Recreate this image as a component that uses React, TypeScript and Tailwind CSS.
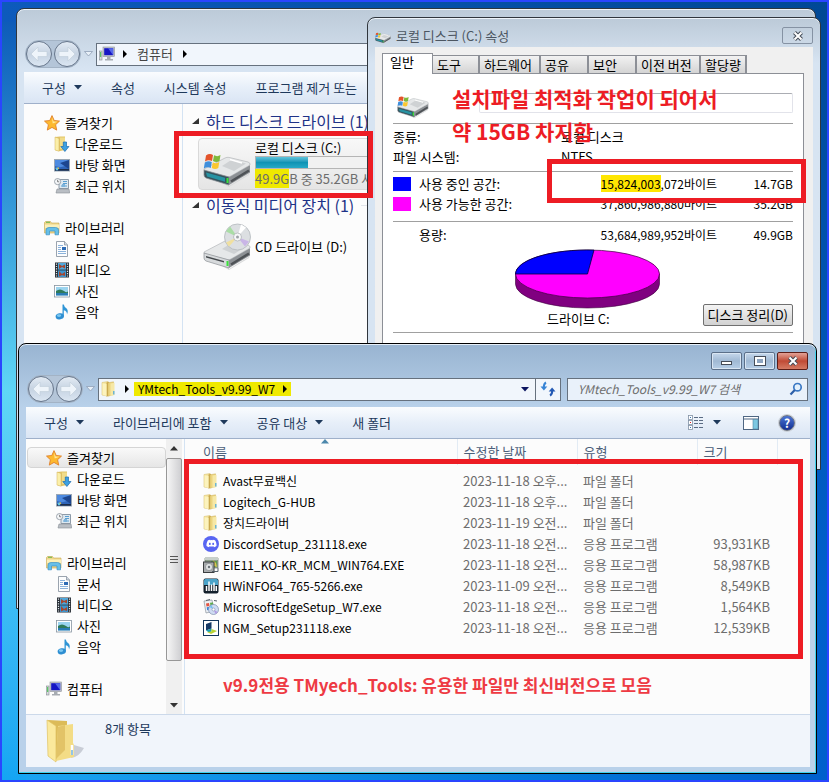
import type { ReactNode } from "react";
import { FaDiscord } from "react-icons/fa";

type IconProps = { size?: number };

const uiFont = "font-['Noto_Sans_CJK_KR',sans-serif]";
const toolbarButtonClass = "flex items-center gap-2 whitespace-nowrap text-[13px] text-[#1e395b]";

function Svg({ size = 16, box = 16, children }: IconProps & { box?: number; children: ReactNode }) {
  return (
    <svg width={size} height={size} viewBox={`0 0 ${box} ${box}`} className="shrink-0" aria-hidden="true">
      {children}
    </svg>
  );
}

function Arrow({ dir = "down", className = "" }: { dir?: "down" | "right" | "up"; className?: string }) {
  const d = { down: "M0 0h8L4 4.5z", right: "M0 0l4 4-4 4z", up: "M0 4.5h8L4 0z" }[dir];
  return (
    <svg
      width={dir === "right" ? 4 : 8}
      height={dir === "right" ? 8 : 5}
      className={`shrink-0 ${className}`}
      fill="currentColor"
      aria-hidden="true"
    >
      <path d={d} />
    </svg>
  );
}

function StarIcon() {
  return (
    <Svg>
      <path
        d="M8 .6l2.2 4.9 5.3.6-3.9 3.6 1.1 5.4L8 12.4l-4.7 2.7 1.1-5.4L.5 6.1l5.3-.6z"
        fill="#fdb92f"
        stroke="#e0802a"
        strokeWidth=".9"
      />
      <path d="M8 2.6l1.5 3.8 4 .4-4.8 1.6z" fill="#ffe79a" />
    </Svg>
  );
}

function FolderIcon({ size }: IconProps) {
  return (
    <Svg size={size}>
      <path d="M1 1.500L7 .5v14.500L1 14z" fill="#f4e49c" stroke="#dcc479" strokeWidth=".6" />
      <path d="M5.500 1.500L8 .8v13.700l-2.500 1.200z" fill="#c9a64b" />
      <path d="M7 1.800L12.500.8V13.500L7 15.200z" fill="#ecd47e" stroke="#cfb15c" strokeWidth=".5" />
      <path d="M9.500 2.500l4-.7V14l-4 1z" fill="#f6e8a6" />
      <path d="M1.500 2.200l4 .8v12L1.500 13.800z" fill="#fcf3be" />
      <path d="M12.800 10v3.500" stroke="#4aa7df" strokeWidth="1.200" />
    </Svg>
  );
}

function DownloadIcon() {
  return (
    <Svg>
      <path d="M1 1l5-.5h5V14l-6 1.2L1 14z" fill="#e2c467" />
      <path d="M1 1l4 1.4v12.8L1 14z" fill="#fbefa9" stroke="#d2b35a" strokeWidth=".5" />
      <path d="M6 1.5h5V13H6z" fill="#f1dc8a" />
      <path d="M9.3 6h3.2v4.5H15l-4.1 5-4.1-5h2.5z" fill="#3ca0e2" stroke="#1b6db0" strokeWidth=".7" />
    </Svg>
  );
}

function DesktopIcon() {
  return (
    <Svg>
      <rect x=".5" y="2.5" width="15" height="11.5" fill="#2e64b8" stroke="#9aa7b5" />
      <path d="M1 3h14v4Q8 12 1 9z" fill="#4d8ae0" />
      <path d="M15 3v9L6 6z" fill="#1d468f" />
      <rect x="1" y="12" width="14" height="1.7" fill="#1c2d49" />
      <circle cx="3" cy="12" r="1.4" fill="#62c3e8" />
      <path d="M3.5 10.5h1.6v1.3H3.5z" fill="#f5c93a" />
    </Svg>
  );
}

function RecentIcon() {
  return (
    <Svg>
      <path d="M5 1.5h9.5v9H5z" fill="#dde8f0" stroke="#8e9ba8" />
      <path d="M9 3.5h4M9 5.5h4M7 8h6" stroke="#5a9fd0" />
      <path d="M8 6h3v3H8z" fill="#7db4dc" />
      <path d="M3 11h12l.7 4H2z" fill="#b9bec4" stroke="#878d94" strokeWidth=".6" />
      <circle cx="3.6" cy="3.6" r="3.1" fill="#f5f7f9" stroke="#8a949e" strokeWidth=".8" />
      <path d="M3.6 1.8v2h1.6" stroke="#555" strokeWidth=".7" fill="none" />
    </Svg>
  );
}

function LibraryIcon() {
  return (
    <Svg>
      <path d="M.5 2.5l1-1h5l1 1.5h7.5v10H.5z" fill="#efd68a" stroke="#c9a84f" strokeWidth=".6" />
      <path d="M1 4.5h14V8H1z" fill="#fbf0b9" />
      <path d="M2 2.3h4" stroke="#6cb84c" />
      <path d="M2 14.8V10q0-2.5 3-2.5h6.5q3 0 3 2.5v4.8H11V11H5.5v3.8z" fill="#66bfe8" stroke="#3a92c6" strokeWidth=".7" />
    </Svg>
  );
}

function DocumentIcon() {
  return (
    <Svg>
      <path d="M2.5.5h8L13.500 4v11.500h-11z" fill="#fcfdfe" stroke="#828d9a" strokeWidth=".8" />
      <path d="M10.500.5V4h3" fill="#cfd7e0" stroke="#828d9a" strokeWidth=".7" />
      <path d="M4 4.500h5M4 6.500h3M4 8.500h3M4 10.500h8M4 12.500h8" stroke="#6d9ed2" strokeWidth=".8" />
      <path d="M8 6h4v3H8z" fill="#2d6bb5" />
    </Svg>
  );
}

function VideoIcon() {
  return (
    <Svg>
      <rect x="1" y=".5" width="14" height="15" fill="#2b3138" />
      <rect x="4" y="1" width="8" height="6.600" fill="#4fa8dc" />
      <rect x="4" y="8.400" width="8" height="6.600" fill="#3d95cf" />
      <path d="M5 2l3 2 3-1.500v4L8 5 5 7zM5 9l3 3 3-2v4l-3-1-3 1.500z" fill="#a5462f" />
      <path d="M2.500 1.500v13M13.500 1.500v13" stroke="#dfe6ea" strokeWidth="1.200" strokeDasharray="1.200 1.200" />
    </Svg>
  );
}

function PictureIcon() {
  return (
    <Svg>
      <rect x=".5" y="2.500" width="15" height="11.500" fill="#fff" stroke="#8794a1" strokeWidth=".8" />
      <rect x="2" y="4" width="12" height="8.500" fill="#9bd4ef" />
      <path d="M2 8q4-3 8 0t4-1v3H2z" fill="#2f7a5a" />
      <path d="M2 10h12v2.500H2z" fill="#2a7cb5" />
    </Svg>
  );
}

function MusicIcon() {
  return (
    <Svg>
      <path d="M8.500.5h1.300q.4 2.400 2.600 3.800Q14.800 6.500 13 10.500q.2-3.500-3.200-4.300v5.800H8.500z" fill="#2f95d6" />
      <ellipse cx="5.800" cy="12.300" rx="4.200" ry="3" transform="rotate(-12 5.800 12.300)" fill="#2f8fd2" />
      <ellipse cx="5" cy="11.600" rx="2.200" ry="1.300" fill="#7cc8f1" />
    </Svg>
  );
}

function ComputerIcon() {
  return (
    <Svg>
      <rect x=".5" y="5" width="2.500" height="9" fill="#d6dadd" stroke="#858b91" strokeWidth=".6" />
      <path d="M1.700 6v5" stroke="#41c24b" />
      <rect x="4" y="1" width="11.500" height="9.500" fill="#c4c8ce" stroke="#8c9197" strokeWidth=".6" />
      <rect x="5.200" y="2.200" width="9" height="7" fill="#1616c4" />
      <path d="M9 2.200h5.200v7z" fill="#5568ea" />
      <path d="M8 10.500h3.500v2.500H14V14.500H6V13h2z" fill="#a7acb2" />
    </Svg>
  );
}

function WindowsFlag() {
  return (
    <g transform="translate(-2 7)">
      <path d="M5 8.500q3.500-2.500 7-.5l-1 6q-3.500-1.800-7 .5z" fill="#e3532a" />
      <path d="M13 8.300q3.500 1.800 6.500-.3l-1 6q-3 2-6.500 0z" fill="#7eb83a" />
      <path d="M3.800 15.500q3.500-2.300 7-.5l-1 6q-3.500-1.800-7 .5z" fill="#3f8fdc" />
      <path d="M11.800 15.300q3.500 1.800 6.500-.2l-1 6q-3 2-6.500 0z" fill="#fbc72f" />
    </g>
  );
}

function DriveBody() {
  return (
    <g>
      <path d="M2 33L26 40v6L47 33l-1 2-20 12z" fill="#d9dadb" />
      <path d="M26 36.500L47 25v7.500L26 45z" fill="#8d9195" />
      <path d="M28 41.500L46 30.500" stroke="#4e5256" strokeWidth="2.500" />
      <path d="M1 29L22 18q2-1 4-.6L45 22q2.500.8 2 3L28 36q-2 1.200-4 .6L2 31q-1.500-.8-1-2z" fill="#e6e8e9" stroke="#a9adb0" strokeWidth=".6" />
      <path d="M19 26l10-6.500 14 4L31 31z" fill="#cfd2d4" />
      <path d="M27 19.500l12 3.500" stroke="#fff" strokeWidth="1.500" />
    </g>
  );
}

function DriveIcon({ size }: IconProps) {
  return (
    <Svg size={size} box={48}>
      <DriveBody />
      <path d="M1 30l25 7v8L3 38q-2-1-2-3z" fill="#37525c" stroke="#8c9195" strokeWidth=".7" />
      <path d="M3 32.500l19 5.300v4L4 36.500z" fill="#2793a3" />
      <path d="M24.500 38v5" stroke="#3be23b" strokeWidth="2" />
      <WindowsFlag />
    </Svg>
  );
}

function CdDriveIcon({ size }: IconProps) {
  return (
    <Svg size={size} box={48}>
      <DriveBody />
      <path d="M1 30l25 7v8L3 38q-2-1-2-3z" fill="#d7dadc" stroke="#8c9195" strokeWidth=".7" />
      <path d="M3 33l18 5v1.500L3 34.500z" fill="#44484c" />
      <path d="M24.500 38v5" stroke="#3be23b" strokeWidth="2" />
      <circle cx="34.500" cy="14" r="13" fill="#dcdfe2" stroke="#b3b7bb" strokeWidth=".8" />
      <path d="M34.500 14L23 8.500l4-5z" fill="#a9dda5" />
      <path d="M34.500 14L26 23.500l-3-4z" fill="#f0e0a0" />
      <path d="M34.500 14L46 18.500l-4 5z" fill="#c9b5e6" />
      <path d="M34.500 14L38 1.500l5 3z" fill="#fff" />
      <circle cx="34.500" cy="14" r="4" fill="#f7f8f9" stroke="#aeb2b6" strokeWidth=".8" />
      <circle cx="34.500" cy="14" r="1.500" fill="#9da2a7" />
    </Svg>
  );
}

function DiscordIcon() {
  return (
    <span className="flex size-4 shrink-0 items-center justify-center rounded-full bg-[#5865f2] text-white">
      <FaDiscord size={11} />
    </span>
  );
}

function InstallerIcon() {
  return (
    <Svg>
      <path d="M2 1h13v10H2z" fill="#8fa08c" stroke="#6b7a6e" strokeWidth=".7" />
      <path d="M2 .8h13v2.200H2z" fill="#c7d0cb" />
      <path d="M8 4h6v6H8z" fill="#5d9c4b" />
      <path d="M10 3l3 3 1 4-3-1z" fill="#dcc452" />
      <rect x=".5" y="5" width="10.500" height="10.500" fill="#a9acae" stroke="#3b3e40" />
      <circle cx="6" cy="10" r="3.600" fill="#dfe2e3" stroke="#7b7f82" strokeWidth=".6" />
      <circle cx="6" cy="10" r="1.200" fill="#687075" />
      <path d="M9 14.500h6V11" stroke="#55606a" fill="none" />
    </Svg>
  );
}

function HwinfoIcon() {
  return (
    <Svg>
      <rect x=".5" y=".5" width="15" height="15" rx="2" fill="#14212c" />
      <path d="M1 2.500q0-1.500 1.500-1.500h11Q15 1 15 2.500V7H1z" fill="#4aa3c9" />
      <path d="M3.500 13V8M6 13V3.500M8.500 13V6.500M11 13V4.500M13.300 13V8" stroke="#fff" strokeWidth="1.500" />
    </Svg>
  );
}

function EdgeSetupIcon() {
  return (
    <Svg>
      <path d="M1 2l8-1 2 11-8 2z" fill="#eef1f4" stroke="#8b949d" strokeWidth=".7" />
      <path d="M3 1.500l4-1M11 1.500l3 .5" stroke="#59636d" />
      <path d="M3 4.500l3-.5.500 3-3 .5z" fill="#e35442" />
      <path d="M7 3.800l3-.4.500 3-3 .5z" fill="#5cab4a" />
      <path d="M3.700 8.200l3-.5.400 3-3 .5z" fill="#3784dd" />
      <circle cx="10.500" cy="10.500" r="5" fill="#cfdcf3" stroke="#7d8cab" strokeWidth=".7" />
      <path d="M10.500 10.500l-4-2.500 2-2z" fill="#78bff0" />
      <path d="M10.500 10.500l4 2.500-2 2z" fill="#b19be4" />
      <circle cx="10.500" cy="10.500" r="1.500" fill="#fff" stroke="#7d8cab" strokeWidth=".6" />
    </Svg>
  );
}

function NgmIcon() {
  return (
    <Svg>
      <rect x=".5" y=".5" width="15" height="15" fill="#fff" stroke="#13365c" />
      <path d="M3 4l5.500-2v6.500L3 10.500z" fill="#163a66" />
      <path d="M3 10.500l5.500-2v3L6 12.500z" fill="#1aa0b5" />
      <path d="M8.500 9l5.500 2-6 3-4-2 4.500-.5z" fill="#b9d233" />
    </Svg>
  );
}

function BigFolderIcon() {
  return (
    <svg width="40" height="45" viewBox="0 0 40 45" className="shrink-0" aria-hidden="true">
      <path d="M25 39q8-1 13-10l-10-3z" fill="#c9cdd6" />
      <path d="M2 1l19 1v4l6 1v28l-17 5z" fill="#dcbb58" />
      <path d="M12 7l15-2v19l1 2v12l-18 4z" fill="#f3dc86" />
      <path d="M12 8l7-2v25l-9 9z" fill="#e2c367" />
      <path d="M1 1l9 6v36l-8-6z" fill="#fbe99c" stroke="#dfc161" strokeWidth=".7" />
      <path d="M26 26v10" stroke="#fff" strokeWidth="2.500" />
      <path d="M26 31v5" stroke="#4a9ed8" strokeWidth="1.200" />
    </svg>
  );
}

function SearchIcon() {
  return (
    <Svg size={14} box={14}>
      <circle cx="8.500" cy="5.200" r="3.700" fill="#e4f1fc" stroke="#3a78c4" strokeWidth="1.700" />
      <path d="M5.800 8L1.500 12.500" stroke="#2c5fa8" strokeWidth="2.200" />
    </Svg>
  );
}

function RefreshIcon() {
  return (
    <Svg>
      <path d="M6 1.500q-2.300 1.200-2.200 5" stroke="#3684d6" strokeWidth="2" fill="none" />
      <path d="M.5 5.500h6.800L3.900 9.500z" fill="#3684d6" />
      <path d="M10 14.500q2.300-1.200 2.200-5" stroke="#2359b4" strokeWidth="2" fill="none" />
      <path d="M8.700 10.500h6.800L12.100 6.500z" fill="#2359b4" />
    </Svg>
  );
}

function ViewIcon() {
  return (
    <Svg>
      {[0, 5, 10].map((y, i) => (
        <g key={y}>
          <rect x=".5" y={y + 0.5} width="4" height="4" fill="#fff" stroke="#8292a5" strokeWidth=".8" />
          <rect x="2" y={y + 2} width="1" height="1" fill={i === 1 ? "#e02020" : "#3477b5"} />
        </g>
      ))}
      <path d="M6 2.500h4M11 2.500h4M6 5.500h4M11 5.500h4M6 8.500h4M11 8.500h4M6 12.500h4M11 12.500h4" stroke="#5b6c84" />
    </Svg>
  );
}

function PaneIcon() {
  return (
    <Svg>
      <rect x=".5" y="1.500" width="15" height="13" fill="#fff" stroke="#4f6783" />
      <path d="M1 4h14" stroke="#4f6783" />
      <rect x="10" y="4.500" width="5" height="9.500" fill="#7cc8e2" stroke="#4f87a5" strokeWidth=".6" />
    </Svg>
  );
}

function HelpIcon() {
  return (
    <span className="flex size-4 shrink-0 items-center justify-center rounded-full border border-[#6f7682] bg-linear-to-b from-[#4b74d4] to-[#142f92] text-xs leading-none font-bold text-white ring-1 ring-[#c9ced6]">
      ?
    </span>
  );
}

function NavButtons() {
  return (
    <div className="flex items-center rounded-full border border-[#a3b3c5] bg-[#b4c5d8]">
      {["뒤로", "앞으로"].map((label, i) => (
        <button
          key={label}
          type="button"
          aria-label={label}
          className={`flex size-[26px] items-center justify-center rounded-full border border-[#66758a] bg-linear-to-b from-[#e3ebf4] via-[#c6d3e2] to-[#dbe6f2] ${i ? "ml-0.5" : ""}`}
        >
          <svg width="18" height="16" viewBox="0 0 18 16" className={i ? "rotate-180" : ""} aria-hidden="true">
            <path d="M1 8l7-7v4.500h9v5H8V15z" fill="#eef4fa" stroke="#c0ccd9" strokeWidth=".6" />
          </svg>
        </button>
      ))}
    </div>
  );
}

function HistoryArrow() {
  return (
    <svg width="9" height="6" className="mx-[3px] shrink-0" aria-hidden="true">
      <path d="M.5.5h8L4.500 5z" fill="#e8f0f8" stroke="#8fa0b6" strokeWidth=".8" />
    </svg>
  );
}

function AddressBar({ icon, path, children }: { icon: ReactNode; path: ReactNode; children?: ReactNode }) {
  return (
    <div className="flex h-[23px] flex-1 items-center border border-[#66717e] bg-[#f1f6fc] pl-0.5">
      {icon}
      <Arrow dir="right" className="ml-2 text-black" />
      {path}
      {children}
    </div>
  );
}

type NavItem = { label: string; icon: ReactNode; root?: boolean };

const favorites: NavItem[] = [
  { label: "즐겨찾기", icon: <StarIcon />, root: true },
  { label: "다운로드", icon: <DownloadIcon /> },
  { label: "바탕 화면", icon: <DesktopIcon /> },
  { label: "최근 위치", icon: <RecentIcon /> },
];

const libraries: NavItem[] = [
  { label: "라이브러리", icon: <LibraryIcon />, root: true },
  { label: "문서", icon: <DocumentIcon /> },
  { label: "비디오", icon: <VideoIcon /> },
  { label: "사진", icon: <PictureIcon /> },
  { label: "음악", icon: <MusicIcon /> },
];

const computer: NavItem[] = [{ label: "컴퓨터", icon: <ComputerIcon />, root: true }];

function NavTree({ selected }: { selected?: string }) {
  return (
    <nav className="flex min-w-0 flex-1 flex-col gap-[21px] pt-2">
      {[favorites, libraries, computer].map((group) => (
        <ul key={group[0].label}>
          {group.map((item) => (
            <li key={item.label}>
              <a
                href="#"
                className={`ml-px flex h-[21px] items-center gap-[5px] border text-[13px] text-black ${
                  item.root ? "pl-[18px]" : "pl-7"
                } ${
                  item.label === selected
                    ? "rounded-sm border-[#d5d5d5] bg-linear-to-b from-[#f9f9f9] to-[#e6e6e6]"
                    : "border-transparent"
                }`}
              >
                {item.icon}
                {item.label}
              </a>
            </li>
          ))}
        </ul>
      ))}
    </nav>
  );
}

function Scrollbar() {
  return (
    <div className="mr-0.5 flex w-4 flex-col items-center bg-[#f0f0f0] text-[#333]">
      <Arrow dir="up" className="my-[7px]" />
      <div className="flex w-full flex-1 flex-col items-center justify-center gap-0.5 rounded-xs border border-[#979797] bg-linear-to-r from-[#f6f6f6] to-[#cfcfd2]">
        <span className="h-px w-2 bg-[#555]" />
        <span className="h-px w-2 bg-[#555]" />
        <span className="h-px w-2 bg-[#555]" />
      </div>
      <Arrow className="mt-[42px] mb-[6px]" />
    </div>
  );
}

function CategoryHeading({ children }: { children: ReactNode }) {
  return (
    <h2 className="flex h-6 items-center gap-[7px] text-base whitespace-nowrap text-[#1e3287]">
      <svg width="7" height="6" className="shrink-0" aria-hidden="true">
        <path d="M7 0v6H0z" fill="#333" />
      </svg>
      {children}
      <span className="h-px flex-1 bg-[#e2e5ea]" />
    </h2>
  );
}

function ComputerWindow() {
  return (
    <section
      aria-label="컴퓨터"
      className="absolute top-[6px] right-[11px] left-[14px] rounded-t-lg border border-[#30363d] bg-linear-to-b from-[#bccad8] to-[#d7e4f2] to-10% pt-[31px] pb-2 shadow-[inset_0_1px_0_#eef4fa]"
    >
      <div className="flex h-7 items-center px-2">
        <NavButtons />
        <HistoryArrow />
        <AddressBar
          icon={<ComputerIcon />}
          path={
            <>
              <button type="button" className="ml-2.5 text-[13px] text-[#444]">
                컴퓨터
              </button>
              <Arrow dir="right" className="ml-2.5 text-black" />
            </>
          }
        />
      </div>
      <div className="mx-[7px] mt-1">
        <div className="flex h-8 items-center gap-[29px] border-b border-[#9fb0ca] bg-linear-to-b from-[#fafcfe] via-[#e7eff9] to-[#dae5f4] pl-[18px]">
          <button type="button" className={toolbarButtonClass}>
            구성 <Arrow />
          </button>
          <button type="button" className={toolbarButtonClass}>
            속성
          </button>
          <button type="button" className={toolbarButtonClass}>
            시스템 속성
          </button>
          <button type="button" className={toolbarButtonClass}>
            프로그램 제거 또는
          </button>
        </div>
        <div className="flex min-h-[496px] bg-[#fcfcfc]">
          <aside className="flex w-[159px] shrink-0 border-r border-[#d4e3f3]">
            <NavTree />
          </aside>
          <div className="min-w-0 flex-1 pt-[5px] pl-[9px]">
            <CategoryHeading>하드 디스크 드라이브 (1)</CategoryHeading>
            <div className="mt-[5px] ml-1.5 flex h-[52px] w-[240px] items-center gap-1 rounded-sm border border-[#d9d9d9] bg-linear-to-b from-[#f8f8f8] to-[#e5e5e5] pl-1">
              <DriveIcon size={48} />
              <div className="flex-1 pr-1">
                <p className="text-[13px] leading-4">로컬 디스크 (C:)</p>
                <div className="h-[13px] border border-[#b5b5b5] bg-[#f1f1f1]">
                  <div
                    className="h-full bg-linear-to-b from-[#5cc5dc] via-[#0f93b4] to-[#25a9c7]"
                    style={{ width: `${(14.7 / 49.9) * 100}%` }}
                  />
                </div>
                <p className="text-[13px] leading-[19px] whitespace-nowrap text-[#6d6d6d]">
                  <mark className="bg-[#efe900] text-inherit">49.9G</mark>B 중 35.2GB 사용 가능
                </p>
              </div>
            </div>
            <div className="mt-[3px]">
              <CategoryHeading>이동식 미디어 장치 (1)</CategoryHeading>
            </div>
            <div className="mt-1 ml-1.5 flex h-[52px] items-center gap-1 pl-[5px]">
              <CdDriveIcon size={48} />
              <p className="text-[13px]">CD 드라이브 (D:)</p>
            </div>
          </div>
        </div>
      </div>
    </section>
  );
}

const tabs = [
  { label: "도구", width: "w-[47px]" },
  { label: "하드웨어", width: "w-[61px]" },
  { label: "공유", width: "w-12" },
  { label: "보안", width: "w-12" },
  { label: "이전 버전", width: "w-16" },
  { label: "할당량", width: "w-[46px]" },
];

function SpaceRow({ label, swatch, bytes, size }: { label: string; swatch?: string; bytes: ReactNode; size: string }) {
  return (
    <div className="grid h-5 grid-cols-[168px_1fr_76px] items-center">
      <dt className="flex items-center gap-2 text-[13px]">
        <span className={`h-3.5 w-[18px] ${swatch ?? ""}`} />
        {label}
      </dt>
      <dd className="text-right text-xs whitespace-nowrap">{bytes}</dd>
      <dd className="text-right text-xs">{size}</dd>
    </div>
  );
}

function UsageChart() {
  return (
    <svg width="145" height="60" viewBox="0 0 145 60" role="img" aria-label="드라이브 C 사용량">
      <path d="M.5 25v10a72 24 0 0 0 144 0V25z" fill="#800080" stroke="#3c003c" strokeWidth=".6" />
      <ellipse cx="72.500" cy="25" rx="72" ry="24" fill="#f0f" stroke="#3c003c" strokeWidth=".7" />
      <path d="M72.500 25H.5A72 24 0 0 1 79 1.100z" fill="#00f" stroke="#00003c" strokeWidth=".8" />
    </svg>
  );
}

function PropertiesDialog() {
  return (
    <section
      role="dialog"
      aria-label="로컬 디스크 (C:) 속성"
      className="absolute top-[15px] right-[6px] left-[365px] rounded-t-lg border border-[#30363d] bg-linear-to-b from-[#bccad8] to-[#d7e4f2] to-10% px-[7px] pb-[7px] shadow-[inset_0_1px_0_#eef4fa]"
    >
      <header className="flex h-[29px] items-center gap-[5px] pt-1.5">
        <DriveIcon size={16} />
        <h2 className="text-[13px] text-[#4c5661]">로컬 디스크 (C:) 속성</h2>
        <button
          type="button"
          aria-label="닫기"
          className="ml-auto flex h-[17px] w-[31px] items-center justify-center rounded-xs border border-[#8592a3]"
        >
          <CloseGlyph />
        </button>
      </header>
      <div className="min-h-[415px] bg-[#f0f0f0] px-[7px] pt-1.5 pr-[9px]">
        <div role="tablist" className="flex items-end text-[13px]">
          <button
            type="button"
            role="tab"
            aria-selected="true"
            className="-mb-px flex h-[21px] w-[51px] items-start border border-b-0 border-[#8c8f96] bg-white pl-[7px] leading-4"
          >
            일반
          </button>
          {tabs.map((tab) => (
            <button
              key={tab.label}
              type="button"
              role="tab"
              aria-selected="false"
              className={`flex h-[18px] items-center border-t border-r-2 border-[#8c8f96] bg-linear-to-b from-[#f2f2f2] to-[#d4d4d4] pl-1 whitespace-nowrap ${tab.width}`}
            >
              {tab.label}
            </button>
          ))}
        </div>
        <div role="tabpanel" className="min-h-[380px] border border-[#8c8f96] bg-white px-2.5">
          <div className="flex h-[50px] items-center border-b border-[#a0a0a0] pt-2 pl-1">
            <DriveIcon size={32} />
            <input
              type="text"
              aria-label="볼륨 이름"
              className="ml-[50px] h-5 min-w-0 flex-1 rounded-xs border border-[#e2e3ea] border-t-[#abadb3] px-1 text-[13px]"
            />
          </div>
          <dl className="border-b border-[#a0a0a0] pt-[3px] pb-1 text-[13px]">
            <div className="grid h-5 grid-cols-[168px_1fr] items-center">
              <dt>종류:</dt>
              <dd>로컬 디스크</dd>
            </div>
            <div className="grid h-5 grid-cols-[168px_1fr] items-center">
              <dt>파일 시스템:</dt>
              <dd>NTFS</dd>
            </div>
          </dl>
          <dl className="border-b border-[#a0a0a0] pt-0.5 pb-[7px]">
            <SpaceRow
              label="사용 중인 공간:"
              swatch="bg-[#0000ff]"
              bytes={
                <>
                  <mark className="bg-[#ffe600] text-inherit">15,824,003</mark>,072바이트
                </>
              }
              size="14.7GB"
            />
            <SpaceRow label="사용 가능한 공간:" swatch="bg-[#ff00ff]" bytes="37,860,986,880바이트" size="35.2GB" />
          </dl>
          <div className="border-b border-[#a0a0a0] pt-[3px] pb-[3px]">
            <dl>
              <SpaceRow label="용량:" bytes="53,684,989,952바이트" size="49.9GB" />
            </dl>
            <div className="mt-1 flex items-end justify-between">
              <div className="ml-[122px] flex flex-col">
                <UsageChart />
                <p className="h-5 pl-8 text-[13px] leading-5">드라이브 C:</p>
              </div>
              <button
                type="button"
                className="mb-[3px] h-[22px] rounded-xs border border-[#707070] bg-linear-to-b from-[#f4f4f4] to-[#d2d2d2] px-1 text-[13px] leading-5 whitespace-nowrap"
              >
                디스크 정리(D)
              </button>
            </div>
          </div>
        </div>
      </div>
    </section>
  );
}

function CloseGlyph() {
  return (
    <svg width="12" height="10" viewBox="0 0 12 10" aria-hidden="true">
      <path d="M2.500 1.500l7 7M9.500 1.500l-7 7" stroke="#454c57" strokeWidth="4" />
      <path d="M2.500 1.500l7 7M9.500 1.500l-7 7" stroke="#fff" strokeWidth="2" />
    </svg>
  );
}

const captionButtonClass =
  "flex h-[18px] w-[31px] items-center justify-center rounded-xs border border-[#5b6f89] bg-linear-to-b from-[#c6d8ec] via-[#a0b9d4] to-[#b7cfe8] shadow-[inset_0_0_0_1px_#d9e6f3]";

type FileRow = { name: string; date: string; type: string; size?: string; icon: ReactNode };

const files: FileRow[] = [
  { name: "Avast무료백신", date: "2023-11-18 오후...", type: "파일 폴더", icon: <FolderIcon /> },
  { name: "Logitech_G-HUB", date: "2023-11-18 오후...", type: "파일 폴더", icon: <FolderIcon /> },
  { name: "장치드라이버", date: "2023-11-19 오전...", type: "파일 폴더", icon: <FolderIcon /> },
  { name: "DiscordSetup_231118.exe", date: "2023-11-18 오전...", type: "응용 프로그램", size: "93,931KB", icon: <DiscordIcon /> },
  { name: "EIE11_KO-KR_MCM_WIN764.EXE", date: "2023-11-18 오전...", type: "응용 프로그램", size: "58,987KB", icon: <InstallerIcon /> },
  { name: "HWiNFO64_765-5266.exe", date: "2023-11-09 오전...", type: "응용 프로그램", size: "8,549KB", icon: <HwinfoIcon /> },
  { name: "MicrosoftEdgeSetup_W7.exe", date: "2023-11-18 오전...", type: "응용 프로그램", size: "1,564KB", icon: <EdgeSetupIcon /> },
  { name: "NGM_Setup231118.exe", date: "2023-11-18 오전...", type: "응용 프로그램", size: "12,539KB", icon: <NgmIcon /> },
];

function FileTable() {
  return (
    <table className="w-full table-fixed border-collapse text-[13px]">
      <colgroup>
        <col />
        <col className="w-[120px]" />
        <col className="w-[120px]" />
        <col className="w-20" />
        <col className="w-[33px]" />
      </colgroup>
      <thead>
        <tr className="h-[26px] text-left text-[#4c607a]">
          <th scope="col" className="relative border-r border-[#e2ebf4] pl-[18px] font-normal">
            이름
            <Arrow dir="up" className="absolute top-0 left-1/2 text-[#4d88ac]" />
          </th>
          <th scope="col" className="border-r border-[#e2ebf4] pl-[6px] font-normal">
            수정한 날짜
          </th>
          <th scope="col" className="border-r border-[#e2ebf4] pl-[6px] font-normal">
            유형
          </th>
          <th scope="col" className="border-r border-[#e2ebf4] pl-[6px] font-normal">
            크기
          </th>
          <td />
        </tr>
        <tr className="h-[5px]" />
      </thead>
      <tbody className="text-[#6d6d6d]">
        {files.map((file) => (
          <tr key={file.name} className="h-[21px] whitespace-nowrap">
            <td className="text-xs text-black">
              <div className="flex items-center gap-1 pl-[18px]">
                {file.icon}
                {file.name}
              </div>
            </td>
            <td className="pl-[6px]">{file.date}</td>
            <td className="pl-[6px]">{file.type}</td>
            <td className="pr-[7px] text-right">{file.size}</td>
            <td />
          </tr>
        ))}
      </tbody>
    </table>
  );
}

function ToolsWindow() {
  return (
    <section
      aria-label="YMtech_Tools_v9.99_W7"
      className="absolute top-[341px] right-[10px] left-[16px] rounded-t-lg border border-black bg-linear-to-b from-[#98b4d1] to-[#b9d1ea] to-15% pb-[6px] shadow-[inset_0_1px_0_#e7f0f9,inset_-1px_-1px_0_#3fd2ec]"
    >
      <div className="flex h-[31px] items-start justify-end gap-0.5 pt-2 pr-2">
        <button type="button" aria-label="최소화" className={captionButtonClass}>
          <span className="mt-1 h-1 w-[11px] border border-[#454c57] bg-white" />
        </button>
        <button type="button" aria-label="최대화" className={captionButtonClass}>
          <span className="h-2 w-2.5 border-2 border-white bg-[#8ea5c0] outline outline-[#454c57]" />
        </button>
        <button
          type="button"
          aria-label="닫기"
          className="flex h-[18px] w-[31px] items-center justify-center rounded-xs border border-[#5c1d17] bg-linear-to-b from-[#e2a196] via-[#c04a35] to-[#d47a63]"
        >
          <CloseGlyph />
        </button>
      </div>
      <div className="flex h-7 items-center px-2">
        <NavButtons />
        <HistoryArrow />
        <AddressBar
          icon={<FolderIcon />}
          path={
            <button type="button" className="ml-[5px] flex h-3.5 items-center gap-2 bg-[#efe900] px-1 text-xs">
              YMtech_Tools_v9.99_W7
              <Arrow dir="right" />
            </button>
          }
        >
          <button type="button" aria-label="이전 위치" className="ml-auto px-1.5 text-[#0b1560]">
            <Arrow />
          </button>
          <button type="button" aria-label="새로 고침" className="flex h-full items-center border-l border-[#66717e] px-1">
            <RefreshIcon />
          </button>
        </AddressBar>
        <label className="ml-1.5 flex h-[23px] w-[241px] items-center border border-[#66717e] bg-[#e9f1fa] pr-1 pl-2.5">
          <input
            type="search"
            aria-label="검색"
            placeholder="YMtech_Tools_v9.99_W7 검색"
            className="min-w-0 flex-1 text-xs italic outline-none placeholder:text-[#6d6d6d]"
          />
          <SearchIcon />
        </label>
      </div>
      <div className="mt-1 mr-[6px] ml-[7px]">
        <div className="flex h-8 items-center gap-[29px] border-b border-[#9fb0ca] bg-linear-to-b from-[#fafcfe] via-[#e7eff9] to-[#dae5f4] pr-[15px] pl-[18px]">
          <button type="button" className={toolbarButtonClass}>
            구성 <Arrow />
          </button>
          <button type="button" className={toolbarButtonClass}>
            라이브러리에 포함 <Arrow />
          </button>
          <button type="button" className={toolbarButtonClass}>
            공유 대상 <Arrow />
          </button>
          <button type="button" className={toolbarButtonClass}>
            새 폴더
          </button>
          <div className="ml-auto flex items-center text-[#1e395b]">
            <button type="button" aria-label="보기 변경" className="flex items-center gap-[9px]">
              <ViewIcon />
              <Arrow />
            </button>
            <button type="button" aria-label="미리 보기 창" className="ml-[22px]">
              <PaneIcon />
            </button>
            <button type="button" aria-label="도움말" className="ml-5">
              <HelpIcon />
            </button>
          </div>
        </div>
        <div className="flex min-h-[275px] bg-[#fcfcfc]">
          <aside className="flex w-[159px] shrink-0 border-r border-[#d4e3f3]">
            <NavTree selected="즐겨찾기" />
            <Scrollbar />
          </aside>
          <div className="min-w-0 flex-1">
            <FileTable />
            <p className="mt-[35px] ml-[38px] text-[17px] leading-6 font-bold whitespace-nowrap text-[#ee3a43]">
              v9.9전용 TMyech_Tools: 유용한 파일만 최신버전으로 모음
            </p>
          </div>
        </div>
        <footer className="flex h-[53px] items-start gap-[19px] border-t border-[#ccd9ea] bg-[#f1f5fb] pt-1 pl-5 text-[13px] text-[#1e395b]">
          <BigFolderIcon />
          <p>8개 항목</p>
        </footer>
      </div>
    </section>
  );
}

export default function App() {
  return (
    <main
      className={`relative min-h-screen overflow-hidden border-2 border-[#2a45ff] bg-linear-to-r from-[#1ca6f2] to-[#0060cc] leading-normal text-black ${uiFont}`}
    >
      <div className="absolute top-0 right-0 h-3/4 w-6 bg-linear-to-b from-[#004895] to-[#0060cc]" />
      <div className="absolute inset-y-0 left-0 w-6 bg-linear-to-b from-[#0b55b5] via-[#5fd6f6] to-[#14a5f3]" />
      <div className="absolute inset-x-0 top-0 h-5 bg-linear-to-r from-[#0d5abc] to-[#004895]" />
      <ComputerWindow />
      <PropertiesDialog />
      <ToolsWindow />
      <div className="pointer-events-none absolute top-[129px] left-[172px] h-[67px] w-[199px] border-5 border-[#ed1c24]" />
      <div className="pointer-events-none absolute top-[157px] left-[545px] h-11 w-[259px] border-5 border-[#ed1c24]" />
      <div className="pointer-events-none absolute top-[457px] right-[24px] left-[182px] h-[200px] border-5 border-[#ed1c24]" />
      <p className="pointer-events-none absolute top-[80px] left-[450px] text-[21px] leading-[33px] font-bold whitespace-nowrap text-[#ed1c24]">
        설치파일 최적화 작업이 되어서
        <br />약 15GB 차지함
      </p>
    </main>
  );
}
